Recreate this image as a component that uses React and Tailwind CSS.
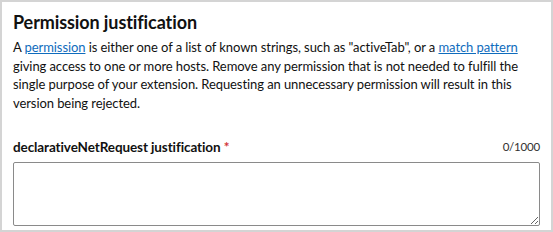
export default function App() {
  return (
    <div className="w-[553px] h-[232px] bg-white border-2 border-[#d4d4d4] overflow-hidden font-['Lato','Noto_Sans',sans-serif] text-[#111111]">
      <div className="pl-[11px] pr-[11px] pt-[8px]">
        <h2 className="text-[18px] font-bold leading-[24px] tracking-[-0.1px]">Permission justification</h2>
        <p className="mt-[4px] text-[13px] leading-[18.5px] tracking-[-0.08px]">
          A <a className="text-[#0f6cbd] underline">permission</a> is either one of a list of known strings, such as "activeTab", or a{' '}
          <a className="text-[#0f6cbd] underline">match pattern</a>
          <br />
          giving access to one or more hosts. Remove any permission that is not needed to fulfill the
          <br />
          single purpose of your extension. Requesting an unnecessary permission will result in this
          <br />
          version being rejected.
        </p>
        <div className="mt-[26px] flex items-end justify-between">
          <label className="text-[13.5px] font-bold leading-[18px] tracking-[-0.1px]">
            declarativeNetRequest justification <span className="text-[#d13438]">*</span>
          </label>
          <span className="text-[11.5px] leading-[18px] tracking-[-0.2px] text-[#323130]">0/1000</span>
        </div>
        <textarea className="mt-[6px] block w-full h-[64px] border border-[#8a8a8a] rounded-[2px] resize-y" />
      </div>
    </div>
  );
}
